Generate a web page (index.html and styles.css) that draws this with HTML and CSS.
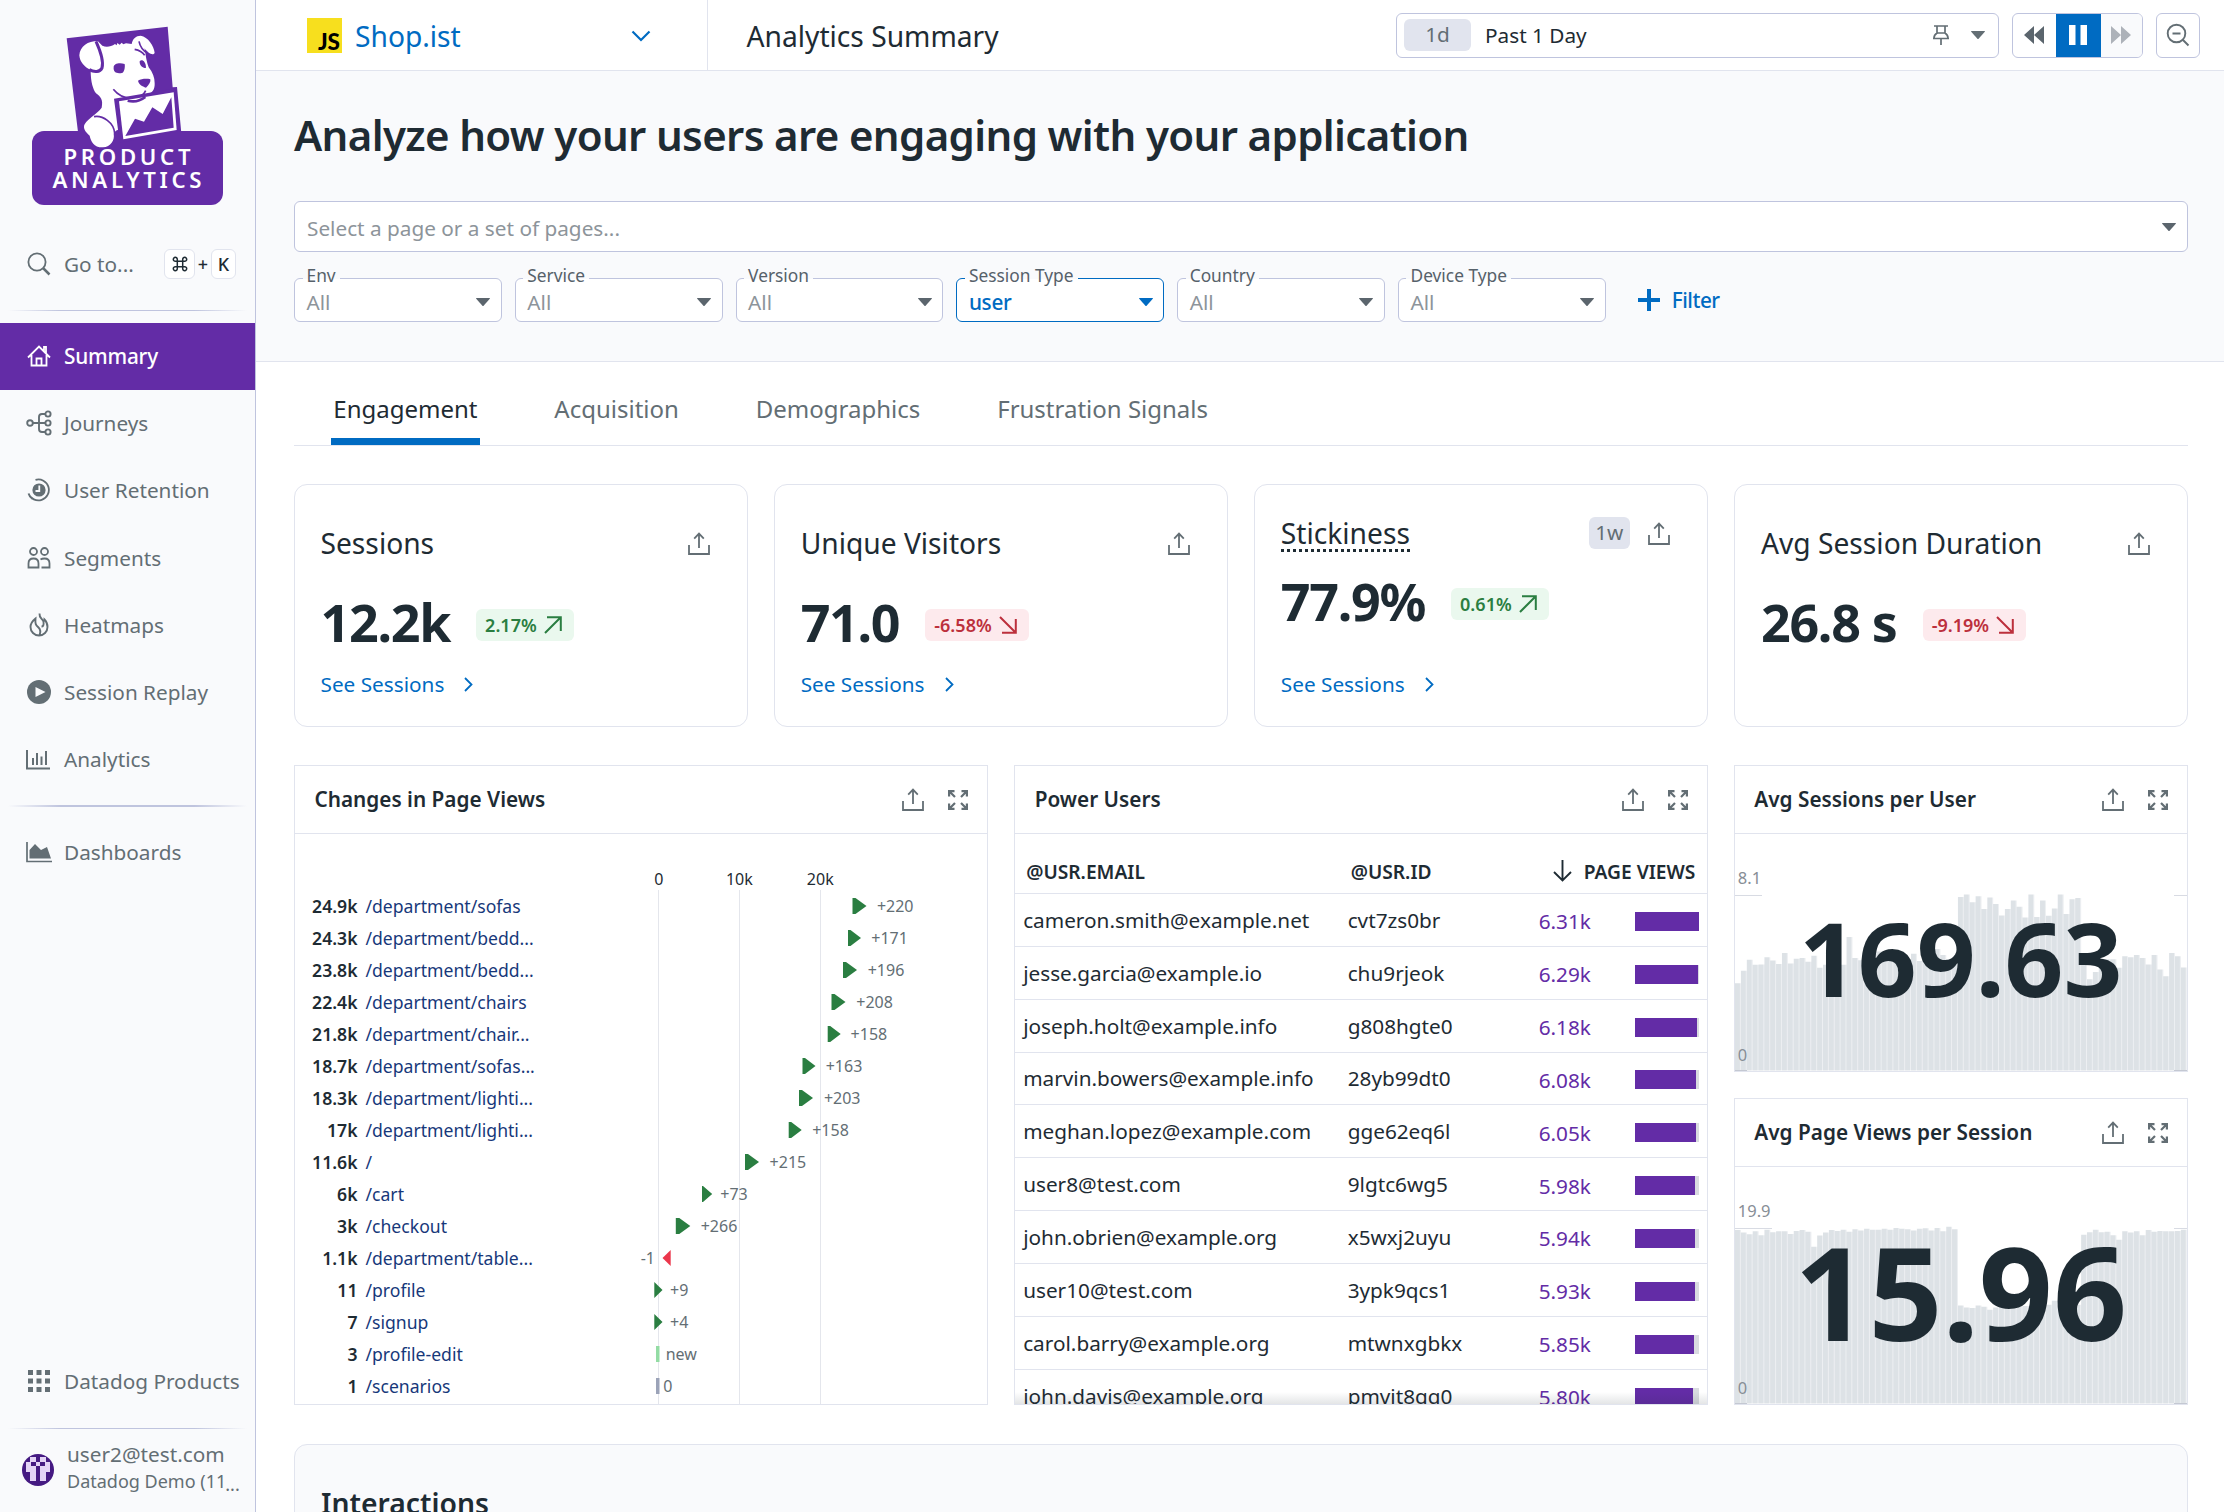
FILE: index.html
```html
<!DOCTYPE html>
<html lang="en">
<head>
<meta charset="utf-8">
<title>Analytics Summary</title>
<link rel="stylesheet" href="styles.css">
</head>
<body>
<svg class="defs" width="0" height="0" aria-hidden="true">
  <symbol id="share" viewBox="0 0 22 23"><path d="M11 1.5V16M6.2 6.6L11 1.6l4.8 5M1 13v9h20v-9" fill="none" stroke="currentColor" stroke-width="1.8"/></symbol>
  <symbol id="expand" viewBox="0 0 20 20"><path d="M1.1 6.5V1.1h5.4M1.5 1.5L7 7M13.500 1.100h5.400v5.400M18.500 1.500L13 7M1.100 13.500v5.400h5.400M1.500 18.500L7 13M13.500 18.900h5.400v-5.400M18.500 18.500L13 13" fill="none" stroke="currentColor" stroke-width="2.200"/></symbol>
  <symbol id="up" viewBox="0 0 18 18"><path d="M1 17L16.500 1.500M3 1.200h13.800V15" fill="none" stroke="currentColor" stroke-width="2"/></symbol>
  <symbol id="down" viewBox="0 0 18 18"><path d="M1 1l15.500 15.500M3 16.800h13.800V3" fill="none" stroke="currentColor" stroke-width="2"/></symbol>
  <symbol id="caret" viewBox="0 0 14 8"><path d="M0 .5Q0 0 .5 0h13q.5 0 .5.5L7.600 7.700Q7 8.300 6.400 7.700z" fill="currentColor"/></symbol>
  <symbol id="next" viewBox="0 0 9 15"><path d="M1 1l6.500 6.500L1 14" fill="none" stroke="currentColor" stroke-width="1.800"/></symbol>
</svg>
<div class="app">
  <aside class="sidebar">
    <div class="brand">
      <svg class="logo" viewBox="96 78 573 540">
        <path fill="#632ca6" d="M200 115L503 80l15 182 13-1 13 139-309 4z"/>
        <rect x="96" y="393" width="573" height="222" rx="36" fill="#632ca6"/>
        <path fill="#fff" d="M238 166c2-28 26-43 55-43l14 14c12 6 26 3 38-5l5 4 2-7 7 5 6-6 5 5 8-3 17 2c3-16 13-25 27-25 22 3 40 31 42 52-6 10-20-1-31-14 5 15 3 29 13 57 12 15 18 31 18 48 1 17-6 32-28 34l-8-1c-18 15-47 21-78 14l8 91c-8 2-13 6-17 13 4 20-9 39-32 41-27 1-36-17-40-35-13-10-21-24-15-34 11-20 38-31 51-50 5-24-3-33-17-43-9-13-16-33-16-71-18-6-33-24-34-43z"/>
        <path fill="none" stroke="#632ca6" stroke-width="9" d="M288 124c10 22 25 56 18 80-6 13-24 13-38 5"/>
        <path fill="none" stroke="#632ca6" stroke-width="5" d="M404 148c12 2 22 6 30 18M417 124c3 15 12 28 26 36"/>
        <path fill="none" stroke="#632ca6" stroke-width="5" d="M340 268c16 20 38 29 63 26 16-2 29-10 34-22M282 350c26-5 60 18 62 50"/>
        <path fill="#632ca6" d="M341 202c0-10 15-15 33-10 2 11-2 24-6 26-15 5-29 0-27-16zM419 184c6-8 19 0 19 19-8 3-20-5-19-19zM414 242c10-5 24-7 37-4 2 8-4 16-13 25-11-4-22-10-24-21zM342 296l185-31 12 129-180 34z"/>
        <path fill="#fff" d="M357 304l164-27 9 113-160 28z"/>
        <path fill="#632ca6" d="M366 309l148-24 1 9-26 48-31-20-25 43-27-9-29 52 143-25-3-30-6-68z" opacity="0"/>
        <path fill="#632ca6" d="M376 408l29-52 27 9 25-43 31 20 26-50 7 91z"/>
        <path fill="none" stroke="#632ca6" stroke-width="6" d="M352 298l9 118"/>
        <path fill="none" stroke="#632ca6" stroke-width="8" d="M383 302c18 5 37 1 53-11"/>
      </svg>
      <div class="brand-name"><span>PRODUCT</span><span>ANALYTICS</span></div>
    </div>
    <div class="goto">
      <svg width="24" height="24" viewBox="0 0 24 24" fill="none" stroke="currentColor"><circle cx="10" cy="10" r="8.600" stroke-width="1.800"/><path d="M16 16l6.500 6.500" stroke-width="2.500"/></svg>
      <span class="goto-text">Go to...</span>
      <kbd><svg width="16" height="16" viewBox="0 0 16 16" fill="none" stroke="currentColor" stroke-width="1.500"><path d="M5.300 5.300h5.400v5.400H5.300zM5.300 5.300H3.400a2 2 0 1 1 1.900-2zM10.700 5.300h1.900a2 2 0 1 0-1.900-2zM5.300 10.700H3.400a2 2 0 1 0 1.900 2zM10.700 10.700h1.900a2 2 0 1 1-1.900 2z"/></svg></kbd><span class="plus">+</span><kbd class="k">K</kbd>
    </div>
    <hr class="rule">
    <nav class="nav">
      <a class="item active"><svg width="24" height="24" viewBox="0 0 24 24" fill="none" stroke="currentColor" stroke-width="1.800"><path d="M1 13.500L12 2.500l11 11M4.500 11v10.500h15V11M9.500 21.500v-7h5v7M17 7V3h2v6"/></svg>Summary</a>
      <a class="item"><svg width="26" height="26" viewBox="0 0 26 26" fill="none" stroke="currentColor" stroke-width="1.900"><circle cx="4" cy="13" r="2.800"/><circle cx="22" cy="4" r="2.600"/><circle cx="22" cy="13" r="2.600"/><circle cx="22" cy="22" r="2.600"/><path d="M7 13h12M19 4h-3q-3 0-3 3v12q0 3 3 3h3"/></svg>Journeys</a>
      <a class="item"><svg width="24" height="24" viewBox="0 0 24 24" fill="none" stroke="currentColor" stroke-width="1.800"><circle cx="12" cy="12" r="6.600" fill="currentColor" stroke="none"/><path d="M12.300 7.500v5.500H8.500" stroke="#f9fafc"/><path d="M8.500 1.800A10.500 10.500 0 1 1 1.500 15.500M1.500 15.500q1 3.500 4 5.500"/></svg>User Retention</a>
      <a class="item"><svg width="24" height="24" viewBox="0 0 24 24" fill="none" stroke="currentColor" stroke-width="1.800"><circle cx="6.500" cy="5.500" r="3.500"/><circle cx="17.500" cy="5.500" r="3.500"/><path d="M1.500 21.500v-4q0-5 5-5t5 5v4zM13.500 13.500q1.500-1 4-1 5 0 5 5v4h-8"/></svg>Segments</a>
      <a class="item"><svg width="24" height="24" viewBox="0 0 24 24" fill="none" stroke="currentColor" stroke-width="1.900"><path d="M12.500.5c-.5 4 2.500 5 4 8 .5-1 1-1.500 1-2 2 2 3 5 3 7.500a8.500 8.500 0 0 1-17 0c0-4 2.500-6.500 5-8.500-.5 6 .5 6.500 3 9 2 2 2.500 4 1 7.500M16.500 8.500c.5 4-.5 5-2 5"/></svg>Heatmaps</a>
      <a class="item"><svg width="24" height="24" viewBox="0 0 24 24"><circle cx="12" cy="12" r="12" fill="currentColor"/><path d="M8.500 7l10 5-10 5z" fill="#f9fafc"/></svg>Session Replay</a>
      <a class="item"><svg width="25" height="24" viewBox="0 0 25 24" fill="none" stroke="currentColor" stroke-width="2"><path d="M1 3v18.500h23M7 18v-7M11 18V6M15.500 18V9.500M20 18V4"/></svg>Analytics</a>
    </nav>
    <hr class="rule thick">
    <a class="item dash"><svg width="26" height="24" viewBox="0 0 26 24"><path d="M1 2v19.500h25" fill="none" stroke="currentColor" stroke-width="1.700"/><path d="M3.500 18.500V10L9 4l6 6 6-3 4 11.500z" fill="currentColor"/></svg>Dashboards</a>
    <div class="bottom">
      <a class="item"><svg width="24" height="24" viewBox="0 0 24 24" fill="currentColor"><path d="M1 1h5v5H1zM9.500 1h5v5h-5zM18 1h5v5h-5zM1 9.500h5v5H1zM9.500 9.500h5v5h-5zM18 9.500h5v5h-5zM1 18h5v5H1zM9.500 18h5v5h-5zM18 18h5v5h-5z"/></svg>Datadog Products</a>
      <hr class="rule">
      <div class="user">
        <svg width="32" height="32" viewBox="0 0 32 32"><circle cx="16" cy="16" r="16" fill="#451a82"/><path d="M8 3h16v5h4v14h-4v5h-6V16h-1v-4h-2v4h-1v11H8v-5H4V8h4z" fill="#e3d3f5"/><path d="M14 3h4v5h-4zM9 8h5v4H9zM18 8h5v4h-5zM14 12h4v16h-4zM4 18h4v5H4zM24 18h4v5h-4z" fill="#451a82"/></svg>
        <div><div class="mail">user2@test.com</div><div class="org">Datadog Demo (11<span>...</span></div></div>
      </div>
    </div>
  </aside>
  <main class="main">
    <header class="topbar">
      <div class="app-pick">
        <span class="js">JS</span><span class="app-name">Shop.ist</span>
        <svg width="20" height="12" viewBox="0 0 20 12"><path d="M1.500 1.500l8.500 8.500 8.500-8.500" fill="none" stroke="#006bc2" stroke-width="2.200"/></svg>
      </div>
      <h2>Analytics Summary</h2>
      <div class="time">
        <span class="pill">1d</span><span class="range">Past 1 Day</span>
        <svg width="18" height="20" viewBox="0 0 18 20" fill="none" stroke="currentColor" stroke-width="1.700"><path d="M2 1h14M5 1v7M13 1v7M5 8h8M1 13.500h16M2 13q0-3 3-5M16 13q0-3-3-5M9 13.500V20"/></svg>
        <svg class="caret" width="14" height="8"><use href="#caret"/></svg>
      </div>
      <div class="play">
        <span class="btn"><svg width="20" height="18" viewBox="0 0 20 18" fill="currentColor"><path d="M10 0v18L0 9zM20 0v18L10 9z"/></svg></span>
        <span class="btn on"><svg width="18" height="20" viewBox="0 0 18 20" fill="#fff"><path d="M0 0h6.500v20H0zM11.500 0H18v20h-6.500z"/></svg></span>
        <span class="btn off"><svg width="20" height="18" viewBox="0 0 20 18" fill="currentColor"><path d="M0 0l10 9L0 18zM10 0l10 9-10 9z"/></svg></span>
      </div>
      <div class="zoom"><svg width="24" height="24" viewBox="0 0 24 24" fill="none" stroke="currentColor" stroke-width="1.900"><circle cx="10.500" cy="10.500" r="8.800"/><path d="M6.500 10.500h8M17 17l5.500 5.500"/></svg></div>
    </header>
    <section class="hero">
      <h1>Analyze how your users are engaging with your application</h1>
      <div class="select-page"><span>Select a page or a set of pages...</span><svg width="14" height="8"><use href="#caret"/></svg></div>
      <div class="filters">
        <div class="field"><label>Env</label><span>All</span><svg width="14" height="8"><use href="#caret"/></svg></div>
        <div class="field"><label>Service</label><span>All</span><svg width="14" height="8"><use href="#caret"/></svg></div>
        <div class="field"><label>Version</label><span>All</span><svg width="14" height="8"><use href="#caret"/></svg></div>
        <div class="field set"><label>Session Type</label><span>user</span><svg width="14" height="8"><use href="#caret"/></svg></div>
        <div class="field"><label>Country</label><span>All</span><svg width="14" height="8"><use href="#caret"/></svg></div>
        <div class="field"><label>Device Type</label><span>All</span><svg width="14" height="8"><use href="#caret"/></svg></div>
        <a class="add"><svg width="22" height="22" viewBox="0 0 22 22"><path d="M11 0v22M0 11h22" stroke="currentColor" stroke-width="4"/></svg>Filter</a>
      </div>
    </section>
    <section class="content">
      <nav class="tabs"><a class="on">Engagement</a><a>Acquisition</a><a>Demographics</a><a>Frustration Signals</a></nav>
      <div class="cards">
        <article class="card"><div class="card-top"><h3>Sessions</h3><svg width="22" height="23"><use href="#share"/></svg></div><div class="figure"><b>12.2k</b><span class="badge good">2.17%<svg width="18" height="18"><use href="#up"/></svg></span></div><a class="see">See Sessions<svg width="9" height="15"><use href="#next"/></svg></a></article>
        <article class="card"><div class="card-top"><h3>Unique Visitors</h3><svg width="22" height="23"><use href="#share"/></svg></div><div class="figure"><b>71.0</b><span class="badge bad">-6.58%<svg width="18" height="18"><use href="#down"/></svg></span></div><a class="see">See Sessions<svg width="9" height="15"><use href="#next"/></svg></a></article>
        <article class="card sticky"><div class="card-top"><h3>Stickiness</h3><span class="week">1w</span><svg width="22" height="23"><use href="#share"/></svg></div><div class="figure"><b>77.9%</b><span class="badge good">0.61%<svg width="18" height="18"><use href="#up"/></svg></span></div><a class="see">See Sessions<svg width="9" height="15"><use href="#next"/></svg></a></article>
        <article class="card"><div class="card-top"><h3>Avg Session Duration</h3><svg width="22" height="23"><use href="#share"/></svg></div><div class="figure"><b>26.8 s</b><span class="badge bad">-9.19%<svg width="18" height="18"><use href="#down"/></svg></span></div></article>
      </div>
      <div class="widgets">
        <article class="widget">
          <header><h4>Changes in Page Views</h4><svg width="22" height="23"><use href="#share"/></svg><svg width="20" height="20"><use href="#expand"/></svg></header>
          <div class="changes">
            <dl class="pages">
              <dt>24.9k</dt><dd>/department/sofas</dd>
              <dt>24.3k</dt><dd>/department/bedd...</dd>
              <dt>23.8k</dt><dd>/department/bedd...</dd>
              <dt>22.4k</dt><dd>/department/chairs</dd>
              <dt>21.8k</dt><dd>/department/chair...</dd>
              <dt>18.7k</dt><dd>/department/sofas...</dd>
              <dt>18.3k</dt><dd>/department/lighti...</dd>
              <dt>17k</dt><dd>/department/lighti...</dd>
              <dt>11.6k</dt><dd>/</dd>
              <dt>6k</dt><dd>/cart</dd>
              <dt>3k</dt><dd>/checkout</dd>
              <dt>1.1k</dt><dd>/department/table...</dd>
              <dt>11</dt><dd>/profile</dd>
              <dt>7</dt><dd>/signup</dd>
              <dt>3</dt><dd>/profile-edit</dd>
              <dt>1</dt><dd>/scenarios</dd>
            </dl>
            <svg class="plot" width="387" height="570" viewBox="600 834 387 570">
              <path d="M658.500 890V1404M739.500 890V1404M820.500 890V1404" stroke="#e4e6ec" fill="none"/>
              <g class="axis"><text x="658.800" y="885">0</text><text x="739.400" y="885">10k</text><text x="820.300" y="885">20k</text></g>
              <g fill="#2a7e41">
                <path d="M852.500 898h3l11 8-11 8h-3zM848 930h2.500l10.500 8-10.500 8H848zM843 962h3l11 8-11 8h-3zM831.500 994h3l11 8-11 8h-3zM827.700 1026h2.500l10.500 8-10.500 8h-2.500zM802.500 1058h2.500l10.500 8-10.500 8h-2.500zM799 1090h3l11 8-11 8h-3zM788.700 1122h2.500l10.500 8-10.500 8h-2.500zM745 1154h3l11 8-11 8h-3zM702 1186h1l9.200 8-9.200 8h-1zM675.800 1218h3.500l11 8-11 8h-3.500zM654.300 1282l8.200 8-8.200 8zM654.300 1314l8.200 8-8.200 8z"/>
              </g>
              <path d="M670.700 1250v16l-8.200-8z" fill="#eb364b"/>
              <path d="M656 1346h3.500v16H656z" fill="#93dca4"/>
              <path d="M656 1378h3.500v16H656z" fill="#9ba3b8"/>
              <g class="delta">
                <text x="876.900" y="912">+220</text><text x="871.300" y="944">+171</text><text x="867.700" y="976">+196</text><text x="856.300" y="1008">+208</text><text x="850.600" y="1040">+158</text><text x="825.700" y="1072">+163</text><text x="823.900" y="1104">+203</text><text x="812.200" y="1136">+158</text><text x="769.600" y="1168">+215</text><text x="720.300" y="1200">+73</text><text x="700.700" y="1232">+266</text><text x="640.700" y="1264">-1</text><text x="670" y="1296">+9</text><text x="670" y="1328">+4</text><text x="665.700" y="1360">new</text><text x="663.200" y="1392">0</text>
              </g>
            </svg>
          </div>
        </article>
        <article class="widget">
          <header><h4>Power Users</h4><svg width="22" height="23"><use href="#share"/></svg><svg width="20" height="20"><use href="#expand"/></svg></header>
          <div class="table">
            <div class="row head"><span>@USR.EMAIL</span><span>@USR.ID</span><span class="sort"><svg width="19" height="22" viewBox="0 0 19 22"><path d="M9.500 0v20.500M1 12l8.500 8.500L18 12" fill="none" stroke="currentColor" stroke-width="1.900"/></svg>PAGE VIEWS</span></div>
            <div class="row"><span>cameron.smith@example.net</span><span>cvt7zs0br</span><em>6.31k</em><i><u style="width:100%"></u></i></div>
            <div class="row"><span>jesse.garcia@example.io</span><span>chu9rjeok</span><em>6.29k</em><i><u style="width:99.700%"></u></i></div>
            <div class="row"><span>joseph.holt@example.info</span><span>g808hgte0</span><em>6.18k</em><i><u style="width:97.900%"></u></i></div>
            <div class="row"><span>marvin.bowers@example.info</span><span>28yb99dt0</span><em>6.08k</em><i><u style="width:96.400%"></u></i></div>
            <div class="row"><span>meghan.lopez@example.com</span><span>gge62eq6l</span><em>6.05k</em><i><u style="width:95.900%"></u></i></div>
            <div class="row"><span>user8@test.com</span><span>9lgtc6wg5</span><em>5.98k</em><i><u style="width:94.800%"></u></i></div>
            <div class="row"><span>john.obrien@example.org</span><span>x5wxj2uyu</span><em>5.94k</em><i><u style="width:94.100%"></u></i></div>
            <div class="row"><span>user10@test.com</span><span>3ypk9qcs1</span><em>5.93k</em><i><u style="width:94%"></u></i></div>
            <div class="row"><span>carol.barry@example.org</span><span>mtwnxgbkx</span><em>5.85k</em><i><u style="width:92.700%"></u></i></div>
            <div class="row"><span>john.davis@example.org</span><span>pmvit8gq0</span><em>5.80k</em><i><u style="width:91.900%"></u></i></div>
          </div>
        </article>
        <div class="stack">
          <article class="widget">
            <header><h4>Avg Sessions per User</h4><svg width="22" height="23"><use href="#share"/></svg><svg width="20" height="20"><use href="#expand"/></svg></header>
            <div class="spark">
              <svg class="bars" viewBox="0 196 77 555" preserveAspectRatio="none">
                <defs><pattern id="bar" width="1" height="555" patternUnits="userSpaceOnUse" y="196"><rect width="1" height="800" fill="#eef0f3"/><rect width=".84" height="800" fill="#dde2e6"/></pattern></defs>
                <path fill="url(#bar)" d="M0 751V546H1V517H2V491H3V503H4V502H5V485H6V493H7V501H8V475H9V500H10V489H11V487H12V496H13V482H14V510H15V503H16V500H17V495H18V503H19V438H20V487H21V492H22V490H23V488H24V472H25V480H26V485H27V490H28V488H29V495H30V477H31V494H32V485H33V480H34V466H35V480H36V490H37V490H38V344H39V338H40V356H41V342H42V372H43V345H44V360H45V387H46V372H47V352H48V367H49V392H50V338H51V391H52V352H53V388H54V371H55V338H56V384H57V349H58V346H59V500H60V537H61V520H62V500H63V490H65V510H66V483H67V485H68V480H69V487H70V502H71V480H72V514H73V530H74V475H75V483H76V509H77V751z"/>
              </svg>
              <div class="marks"><span class="max">8.1</span><span class="zero">0</span></div>
              <strong class="n1">169.63</strong>
            </div>
          </article>
          <article class="widget">
            <header><h4>Avg Page Views per Session</h4><svg width="22" height="23"><use href="#share"/></svg><svg width="20" height="20"><use href="#expand"/></svg></header>
            <div class="spark">
              <svg class="bars" viewBox="0 976 77 555" preserveAspectRatio="none">
                <defs><pattern id="bar2" width="1" height="555" patternUnits="userSpaceOnUse" y="976"><rect width="1" height="800" fill="#eef0f3"/><rect width=".84" height="800" fill="#dde2e6"/></pattern></defs>
                <path fill="url(#bar2)" d="M0 1531V1124H1V1130H2V1134H3V1127H4V1136H5V1123H6V1129H7V1127H9V1133H10V1126H11V1124H12V1128H13V1163H14V1137H15V1130H16V1124H17V1126H18V1123H19V1128H20V1122H21V1125H22V1121H23V1123H25V1121H26V1123H27V1119H28V1121H29V1122H30V1125H31V1121H32V1120H33V1125H34V1119H35V1127H36V1116H37V1122H38V1301H39V1306H40V1307H41V1301H42V1304H43V1311H44V1306H45V1303H46V1306H47V1300H48V1304H49V1302H51V1304H53V1299H54V1290H55V1300H58V1299H59V1135H60V1129H61V1123H62V1129H63V1128H64V1136H65V1147H66V1127H67V1130H68V1127H69V1136H70V1124H71V1128H72V1126H73V1127H75V1126H76V1123H77V1531z"/>
              </svg>
              <div class="marks"><span class="max">19.9</span><span class="zero">0</span></div>
              <strong class="n2">15.96</strong>
            </div>
          </article>
        </div>
      </div>
      <section class="interactions"><h3>Interactions</h3></section>
    </section>
  </main>
</div>
</body>
</html>
```

FILE: styles.css
```css
* { box-sizing: border-box; }
html, body { margin: 0; height: 1512px; overflow: hidden; }
body { font-family: "Noto Sans", sans-serif; font-size: 20.750px; color: #1e2b33; background: #fff; }
h1, h2, h3, h4, dl, dd { margin: 0; }
svg { flex: none; display: block; }
.defs { position: absolute; }
.app { display: flex; width: 2224px; height: 1512px; overflow: hidden; }

/* sidebar */
.sidebar { width: 256px; flex: none; height: 1512px; background: #f9fafc; border-right: 1px solid #bfc4de; display: flex; flex-direction: column; color: #636e74; }
.brand { height: 206px; padding: 26px 0 0 32px; display: grid; grid-template-columns: 191px; flex: none; }
.logo { grid-area: 1 / 1; width: 191px; height: 180px; }
.brand-name { grid-area: 1 / 1; z-index: 1; padding-top: 119px; display: flex; flex-direction: column; align-items: center; color: #fff; font-size: 22.200px; font-weight: 600; line-height: 23.300px; letter-spacing: 3.700px; }
.brand-name span { margin-right: -2.700px; }
.goto { height: 32px; margin-top: 42px; padding-left: 27px; display: flex; align-items: center; flex: none; }
.goto-text { margin-left: 13px; width: 100px; }
kbd { width: 31px; height: 30px; border: 1px solid #e1e4ee; border-radius: 6px; background: #fff; display: flex; align-items: center; justify-content: center; font: 500 18px "Noto Sans", sans-serif; color: #1e2b33; }
kbd.k { width: 25px; }
.plus { width: 16px; text-align: center; color: #1e2b33; font-size: 18px; font-weight: 500; }
.rule { border: 0; height: 1px; margin: 30px 8px 12px; width: 239px; flex: none; background: linear-gradient(90deg, transparent, #bfc4de 22%, #bfc4de 78%, transparent); }
.rule.thick { height: 2px; margin: 12px 8px 12px; }
.item { height: 67.200px; display: flex; align-items: center; white-space: nowrap; padding-bottom: 1px; }
.item svg { margin: 0 13px 0 27px; }
.item svg[width="26"] { margin: 0 12px 0 26px; }
.item svg[width="25"] { margin: 0 13px 0 26px; }
.item.active { background: #632ca6; color: #fff; font-weight: 500; letter-spacing: -.2px; }
.bottom { margin-top: auto; height: 165px; flex: none; }
.bottom .item { padding: 0; }
.bottom .rule { margin: 14px 8px 11px; }
.user { display: flex; padding: 0 0 0 22px; gap: 13px; align-items: center; height: 55px; }
.user svg { position: relative; top: 2px; }
.mail { line-height: 27px; }
.org { font-size: 18px; line-height: 26px; white-space: nowrap; }
.org span { position: relative; top: 3px; left: -1px; }

/* top bar */
.main { flex: 1; min-width: 0; display: flex; flex-direction: column; }
.topbar { height: 71px; flex: none; border-bottom: 1px solid #e1e4ee; display: flex; align-items: center; padding-right: 24px; }
.app-pick { width: 452px; height: 70px; border-right: 1px solid #e1e4ee; display: flex; align-items: center; padding: 2px 56px 0 51px; }
.js { width: 35px; height: 35px; background: #f7df1e; color: #000; font-family: Lato, sans-serif; font-size: 22.500px; font-weight: 900; line-height: 16px; display: flex; align-items: flex-end; justify-content: flex-end; padding: 0 2px 3px 0; margin-top: -1px; }
.app-name { margin: 0 auto 0 13px; font-size: 28.200px; color: #006bc2; line-height: 40px; }
h2 { font-size: 28.200px; font-weight: 400; margin: 0 auto 0 38.500px; line-height: 40px; padding-top: 2px; }
.time { width: 603px; height: 45px; border: 1px solid #bfc4de; border-radius: 6px; display: flex; align-items: center; padding: 0 13px 0 7px; color: #636e74; }
.pill { width: 67px; height: 32px; background: #e1e4ee; border-radius: 6px; text-align: center; line-height: 31px; }
.range { color: #1e2b33; margin: 0 auto 0 14px; font-size: 20.750px; line-height: 28px; }
.time .caret { margin-left: 21px; }
.play { display: flex; width: 131px; height: 45px; margin: 0 13px 0 13px; border: 1px solid #bfc4de; border-radius: 6px; overflow: hidden; }
.btn { flex: 1; display: flex; align-items: center; justify-content: center; color: #5b656d; padding-right: 1px; }
.btn.on { background: #006bc2; margin: -1px 0; flex: 0 0 45px; }
.btn.off { background: #f9fafc; color: #adb2b9; padding: 0; }
.zoom { width: 44px; height: 45px; border: 1px solid #bfc4de; border-radius: 6px; display: flex; align-items: center; justify-content: center; color: #636e74; }

/* filters */
.hero { height: 291px; flex: none; background: #f9fafc; border-bottom: 1px solid #e1e4ee; padding: 36px 36px 0 38px; }
h1 { font-size: 42px; font-weight: 600; line-height: 56px; white-space: nowrap; letter-spacing: -.640px; }
.select-page { height: 51px; margin-top: 38px; background: #fff; border: 1px solid #bfc4de; border-radius: 6px; display: flex; justify-content: space-between; align-items: center; padding: 3px 11px 0 12px; color: #8d949a; }
.select-page svg { color: #5b656d; margin-top: -2px; }
.filters { display: flex; gap: 13px; margin-top: 26px; }
.field { position: relative; width: 207.800px; height: 44px; background: #fff; border: 1px solid #bfc4de; border-radius: 6px; display: flex; align-items: center; justify-content: space-between; padding: 4px 10.500px 0 11.500px; color: #8d949a; }
.field svg { color: #5b656d; }
.field label { position: absolute; left: 7.500px; top: -16px; padding: 0 4px; font-size: 17.333px; line-height: 24px; color: #56616a; background: linear-gradient(#f9fafc 16px, #fff 16px); }
.field.set { border-color: #006bc2; color: #006bc2; font-weight: 500; letter-spacing: -.3px; }
.field.set label { font-weight: 400; letter-spacing: 0; }
.field.set svg { color: #006bc2; }
.add { display: flex; align-items: center; gap: 12px; color: #006bc2; margin-left: 19px; height: 43px; font-weight: 500; letter-spacing: -.500px; }

/* content */
.content { padding: 0 36px 0 38px; flex: none; }
.tabs { height: 84px; border-bottom: 1px solid #e1e4ee; display: flex; gap: 72.300px; padding-left: 37px; }
.tabs a { padding: 31px 2.300px 0; height: 83px; line-height: 32px; font-size: 24px; color: #636e74; }
.tabs a.on { color: #1e2b33; border-bottom: 7px solid #006bc2; }
.cards { display: grid; grid-template-columns: repeat(4, 1fr); gap: 26.667px; margin-top: 38px; }
.card { height: 243px; border: 1px solid #e1e4ee; border-radius: 13px; padding: 38px 37px 28px 25.500px; display: flex; flex-direction: column; }
.card-top { height: 40px; display: flex; align-items: center; color: #636e74; }
.card h3 { font-size: 28.200px; font-weight: 400; line-height: 36px; color: #1e2b33; margin-right: auto; white-space: nowrap; }
.figure { display: flex; align-items: center; margin-top: 24px; height: 70px; white-space: nowrap; }
.figure b { font-size: 52px; font-weight: 700; line-height: 70px; letter-spacing: -1.300px; }
.badge { height: 32px; margin: 5px 0 0 26px; border-radius: 6px; padding: 0 12px 0 9px; display: flex; align-items: center; gap: 7px; font-size: 18px; font-weight: 600; }
.good { background: #eaf8ee; color: #2a7e41; }
.bad { background: #fdeaed; color: #bc303c; }
.see { margin-top: auto; display: flex; align-items: center; gap: 20px; line-height: 28px; color: #006bc2; }
.sticky { padding-top: 28px; }
.sticky h3 { border-bottom: 3px dotted #1e2b33; line-height: 31px; margin-top: 3px; }
.sticky .figure { margin-top: 13px; }
.week { width: 41px; height: 32px; margin-right: 18px; background: #e1e4ee; border-radius: 6px; text-align: center; line-height: 31px; }
.widgets { display: grid; grid-template-columns: 693.500px 693.500px 1fr; gap: 26.667px; margin-top: 38px; height: 640px; }
.widget { border: 1px solid #e1e4ee; display: flex; flex-direction: column; min-height: 0; overflow: hidden; background: #fff; }
.widget > header { height: 68px; flex: none; border-bottom: 1px solid #e1e4ee; display: flex; align-items: center; padding: 0 18.500px 0 19.500px; color: #636e74; }
.stack .widget > header { padding: 0 19px; }
h4 { font-size: 20.750px; font-weight: 600; margin: -2px auto 0 0; color: #1e2b33; white-space: nowrap; }
.widget header svg + svg { margin-left: 24px; }
.changes { display: flex; }
.pages { width: 305px; flex: none; padding-top: 56px; display: grid; grid-template-columns: 62.500px 1fr; column-gap: 8px; grid-auto-rows: 32px; font-size: 17.600px; line-height: 32px; }
.pages dt { text-align: right; font-weight: 600; }
.pages dd { color: #17387a; white-space: nowrap; }
.axis { font-size: 16px; text-anchor: middle; fill: #1e2b33; }
.delta { font-size: 16px; fill: #636e74; }
.table { position: relative; flex: 1; overflow: hidden; }
.table::after { content: ""; position: absolute; inset: auto 0 0; height: 12px; background: linear-gradient(transparent, rgba(30, 43, 51, .12)); }
.row { height: 52.850px; border-bottom: 1px solid #e1e4ee; display: grid; grid-template-columns: 324.500px 191px 96px 64px; padding-left: 8px; align-items: center; white-space: nowrap; font-size: 20.750px; }
.row em { font-style: normal; color: #632ca6; padding-top: 3px; }
.row i { height: 19px; background: #d9dbe0; display: block; margin-top: 3px; }
.row u { display: block; height: 19px; background: #632ca6; }
.head { height: 60px; font-size: 19.200px; font-weight: 600; padding: 15px 0 0 11px; grid-template-columns: 324.500px 202px auto; }
.sort { display: flex; align-items: center; gap: 12px; }
.stack { display: flex; flex-direction: column; gap: 26.667px; }
.stack .widget { height: 306.500px; }
.spark { flex: 1; display: grid; overflow: hidden; grid-template: 100% / 100%; }
.spark > * { grid-area: 1 / 1; }
.bars { width: 100%; height: 100%; }
.marks { display: flex; flex-direction: column; justify-content: space-between; align-items: flex-start; font-size: 16.500px; line-height: 22px; color: #878e96; background: linear-gradient(#d8dbe3, #d8dbe3) right 61px / 13px 1px no-repeat, linear-gradient(#c4c8d2, #c4c8d2) right bottom / 13px 1px no-repeat; }
.max { margin-top: 33px; height: 29px; padding: 0 1px 0 2.500px; border-bottom: 1px solid #d8dbe3; }
.zero { padding: 0 0 0 2.500px; height: 27px; width: 12px; border-bottom: 1px solid #c4c8d2; }
.spark strong { text-align: center; font-weight: 700; z-index: 1; margin-left: -1px; }
.n1 { font-size: 103px; line-height: 247px; }
.n2 { font-size: 129.500px; line-height: 249px; }
.interactions { margin-top: 39px; height: 200px; border: 1px solid #e1e4ee; border-radius: 13px; background: #f9fafc; padding: 38px 26px; }
.interactions h3 { font-size: 28.300px; font-weight: 600; line-height: 40px; }
```
